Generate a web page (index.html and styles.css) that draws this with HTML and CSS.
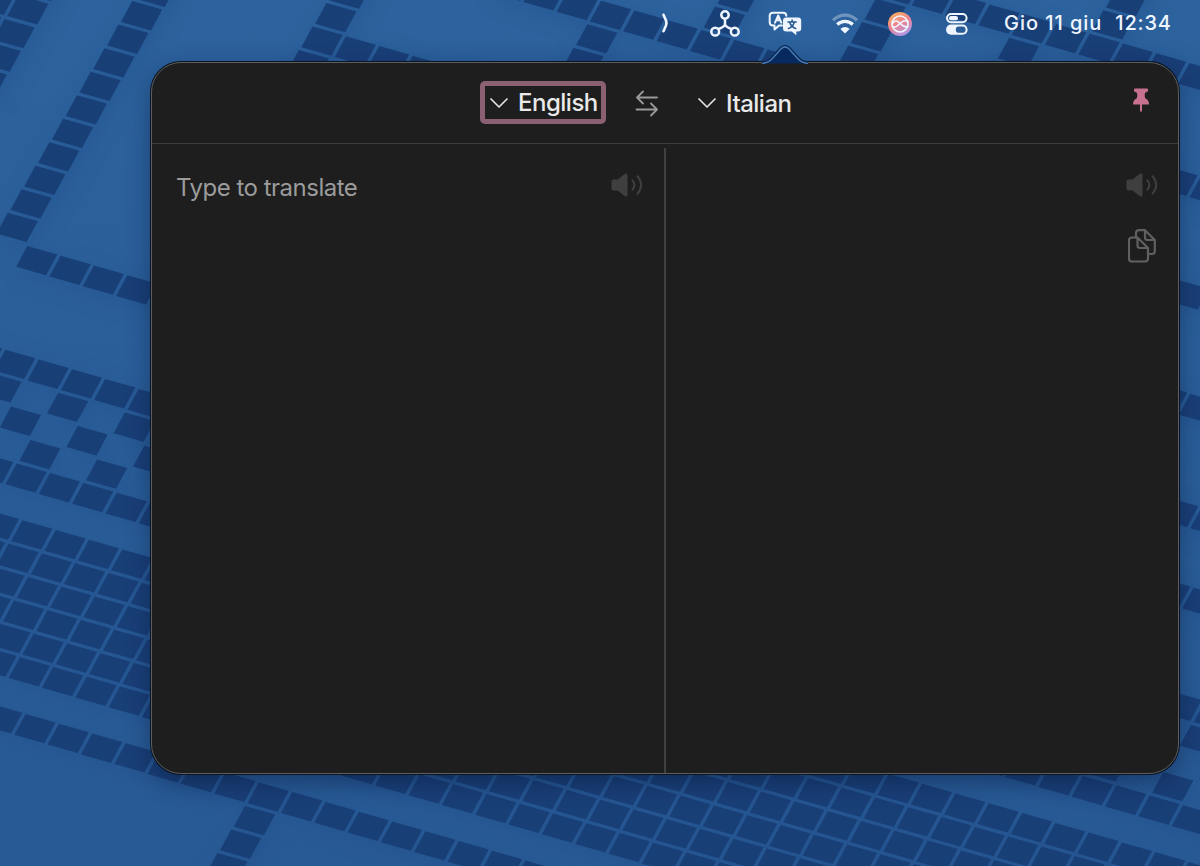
FILE: index.html
```html
<!DOCTYPE html>
<html lang="it">
<head>
    <meta charset="UTF-8">
    <meta name="viewport" content="width=device-width, initial-scale=1.0">
    <title>Translate</title>
    <link rel="stylesheet" href="styles.css">
</head>
<body>
    <svg class="wallpaper" viewBox="0 0 1200 866">
        <path id="tiles" class="tiles" d=""/>
    </svg>

    <div class="menubar">
        <svg class="chevron" width="10" height="22" viewBox="0 0 10 22"><path d="M3.5 2.8L6 8.5Q7 11 6 13.5L3.5 19.2"/></svg>
        <svg class="nodes" width="30" height="28" viewBox="0 0 30 28">
            <circle cx="15" cy="5" r="3.7"/><circle cx="5.2" cy="21.7" r="3.9"/><circle cx="24.8" cy="21.7" r="3.9"/>
            <path d="M15 9V14.5M8.3 19Q13.5 17.5 15 14.5Q16.5 17.5 21.7 19"/>
        </svg>
        <svg class="bubbles" width="34" height="26" viewBox="0 0 34 26">
            <path class="line" d="M14 14.5H11L6.5 18.5V14.5H5Q1.7 14.5 1.7 11.3V4.8Q1.7 1.7 5 1.7H15Q18.3 1.7 18.3 4.8"/>
            <path class="line thin" d="M7 11.6L10.2 4.5L13.3 11.6M8.2 9.2H12.2"/>
            <path class="solid" d="M18.2 6.5H30Q33.2 6.5 33.2 9.7V17.2Q33.2 20.4 30 20.4H28.3V24.2L23.8 20.4H18.2Q15 20.4 15 17.2V9.7Q15 6.5 18.2 6.5Z"/>
            <path class="ink" d="M20 11H28.2M24.1 9V11M26.3 11.2Q25 15.8 20.3 17.6M22 12.3Q24 16.3 27.8 17.6"/>
        </svg>
        <svg class="wifi" width="28" height="22" viewBox="0 0 28 22">
            <path class="faint" d="M2 7.3Q7.2 2.2 14 2.2T26 7.3"/>
            <path d="M6.2 11.5Q9.5 8.3 14 8.3T21.8 11.5"/>
            <path class="solid" d="M14 20.5L9.4 16Q11.4 14 14 14T18.6 16Z"/>
        </svg>
        <svg class="orb" width="24" height="24" viewBox="0 0 24 24">
            <defs>
                <linearGradient id="orb" x1="0.2" y1="0" x2="0.7" y2="1">
                    <stop offset="0" stop-color="#f7b45c"/><stop offset=".5" stop-color="#ef8190"/><stop offset="1" stop-color="#a79af0"/>
                </linearGradient>
            </defs>
            <circle class="disc" cx="12" cy="12" r="12"/>
            <circle cx="12" cy="12" r="8"/>
            <path d="M4 12Q7.5 6.5 12 11.2T20 14.5M4.5 15Q8 15.8 12 11.5T20 9.5"/>
        </svg>
        <svg class="control" width="22" height="22" viewBox="0 0 22 22">
            <rect class="line" x="1" y="1" width="19.6" height="8.2" rx="4.1"/>
            <rect class="solid" x="3" y="3" width="9" height="4.3" rx="2.1"/>
            <rect class="solid" x="0" y="11.6" width="21.6" height="10.2" rx="5.1"/>
            <rect class="hole" x="9.8" y="13.6" width="9.8" height="6.2" rx="3.1"/>
        </svg>
        <span class="date">Gio 11 giu</span>
        <span class="time">12:34</span>
    </div>

    <div class="popover">
        <svg class="arrow" width="46" height="20" viewBox="0 0 46 20">
            <path class="edge" d="M0 18.5C5 18 7 16 9 14L18 4Q23 -1 28 4L37 14C39 16 41 18 46 18.5"/>
            <path class="fill" d="M0 19.5C6 19 8 17 10 15L19 5Q23 1 27 5L36 15C38 17 40 19 46 19.5"/>
        </svg>
        <div class="header">
            <button class="lang selected">
                <svg width="18" height="12" viewBox="0 0 18 12"><path d="M1 2L9 10L17 2"/></svg>
                <span>English</span>
            </button>
            <svg class="swap" width="24" height="28" viewBox="0 0 24 28">
                <path d="M22 8.5H2M8 2.5L2 8.5L8 14.5M1.5 20.5H22M16 14.5L22 20.5L16 26.5"/>
            </svg>
            <button class="lang">
                <svg width="18" height="12" viewBox="0 0 18 12"><path d="M1 2L9 10L17 2"/></svg>
                <span>Italian</span>
            </button>
            <svg class="pin" width="18" height="25" viewBox="0 0 18 25">
                <path d="M3 .5H15Q16 .5 16 1.5V2.7Q16 3.5 15 3.8Q12.5 4.5 12.7 6.5L13 10Q17 12 17 16Q17 16.6 16.2 16.6H10V22.5L9 24.5L8 22.5V16.6H1.8Q1 16.6 1 16Q1 12 5 10L5.3 6.5Q5.5 4.5 3 3.8Q2 3.5 2 2.7V1.5Q2 .5 3 .5Z"/>
            </svg>
        </div>
        <div class="panes">
            <div class="pane source">
                <div class="placeholder">Type to translate</div>
                <svg class="speaker" width="32" height="24" viewBox="0 0 32 24">
                    <path class="solid" d="M2.5 6.5H6.5L14 .8Q16.5 -.5 16.5 2V22Q16.5 24.5 14 23.2L6.5 17.5H2.5Q.5 17.5 .5 15.5V8.5Q.5 6.5 2.5 6.5Z"/>
                    <path d="M21.5 7.3Q25.3 12 21.5 16.7M26.5 3.2Q33.8 12 26.5 20.8"/>
                </svg>
            </div>
            <div class="pane result">
                <svg class="speaker" width="32" height="24" viewBox="0 0 32 24">
                    <path class="solid" d="M2.5 6.5H6.5L14 .8Q16.5 -.5 16.5 2V22Q16.5 24.5 14 23.2L6.5 17.5H2.5Q.5 17.5 .5 15.5V8.5Q.5 6.5 2.5 6.5Z"/>
                    <path d="M21.5 7.3Q25.3 12 21.5 16.7M26.5 3.2Q33.8 12 26.5 20.8"/>
                </svg>
                <svg class="copy" width="28" height="34" viewBox="0 0 28 34">
                    <path d="M4 8.5H9.5L20 19V29.5Q20 32.5 17 32.5H4Q1 32.5 1 29.5V11.5Q1 8.5 4 8.5ZM9.5 8.5V16.5Q9.5 19 12 19H20"/>
                    <path d="M8 8.5V4Q8 1.2 11 1.2H17L26.8 11V22Q26.8 25 24 25H20.5M17 1.2V8.5Q17 11 19.5 11H26.8"/>
                </svg>
            </div>
        </div>
    </div>

    <script>
        // tile grid: [first row, last row, first column, last column]
        const areas = [
            [-12, -1, -1, -1], [-12, -6, -4, -4], [-12, -8, -5, -5],
            [0, 0, 0, 45], [-14, -10, 4, 4], [-11, -11, 5, 45],
            [-15, -15, 8, 45], [-14, -12, 11, 11], [-18, -16, 14, 14],
            [-19, -16, 18, 18], [-19, -19, 19, 45], [-18, -16, 22, 22], [-23, -20, 24, 24],
            [-7, -7, 10, 45], [-3, -3, 10, 45],
            [4, 4, -2, 45], [8, 8, -2, 45], [10, 15, -2, 50],
            [17, 17, -2, 50], [18, 22, 14, 14]
        ];

        function tile(col, row) {
            const x = 27.3 + col * 33.32 - row * 13.82;
            const y = 246 + col * 9.765 + row * 23.51;
            return `M${x.toFixed(1)} ${y.toFixed(1)}l30 8.5l-11.2 20.8l-30 -8.5z`;
        }

        let d = '';
        areas.forEach(([r1, r2, c1, c2]) => {
            for (let r = r1; r <= r2; r++) {
                for (let c = c1; c <= c2; c++) d += tile(c, r);
            }
        });
        // checkered band
        for (let r = 5; r <= 7; r++) {
            for (let c = -3; c <= 45; c++) {
                if ((c + r) % 2 === 0) d += tile(c, r);
            }
        }
        document.getElementById('tiles').setAttribute('d', d);
    </script>
</body>
</html>
```
FILE: styles.css
```css
* {
    box-sizing: border-box;
}
body {
    margin: 0;
    width: 1200px;
    height: 866px;
    overflow: hidden;
    position: relative;
    background: linear-gradient(#2c629d, #285a95);
    font-family: Inter, "Liberation Sans", sans-serif;
}
svg {
    display: block;
    flex: none;
    fill: none;
    stroke-linecap: round;
    stroke-linejoin: round;
}
.wallpaper {
    position: absolute;
    top: 0;
    left: 0;
    width: 1200px;
    height: 866px;
}
.tiles {
    fill: #193f77;
    filter: drop-shadow(3px 6px 10px rgba(28, 72, 135, 0.32));
}
.menubar {
    position: relative;
    display: flex;
    align-items: center;
    height: 46px;
    padding-left: 660px;
    color: #eef5ff;
    stroke: #eef5ff;
    font-size: 20px;
    font-weight: 500;
    white-space: nowrap;
}
.menubar span {
    stroke: none;
}
.menubar .solid {
    fill: #eef5ff;
    stroke: none;
}
.chevron {
    stroke-width: 2.6;
}
.nodes {
    margin: 1px 0 0 40px;
    stroke-width: 2.5;
}
.bubbles {
    margin: 1px 0 0 28px;
    stroke-width: 2;
}
.bubbles .ink {
    stroke: #24558e;
    stroke-width: 1.5;
}
.wifi {
    margin: 2px 0 0 29px;
    stroke-width: 3.2;
    stroke-linecap: butt;
}
.wifi .faint {
    opacity: 0.35;
}
.orb {
    margin: 2px 0 0 29px;
    stroke-width: 1.6;
}
.orb .disc {
    fill: url(#orb);
    stroke: none;
}
.control {
    margin: 1px 0 0 34px;
    stroke-width: 2;
}
.control .hole {
    fill: #2a5c98;
    stroke: none;
}
.date {
    margin-left: 36px;
    letter-spacing: 0.95px;
}
.time {
    margin-left: 13px;
    letter-spacing: 0.8px;
}
.popover {
    position: absolute;
    left: 151px;
    top: 62px;
    width: 1028px;
    height: 712px;
    display: flex;
    flex-direction: column;
    background: #1e1e1e;
    border: 1px solid #5c5e5f;
    border-radius: 30px;
    box-shadow: 0 0 0 1px #0b1420, 0 8px 24px rgba(0, 15, 45, 0.4);
}
.arrow {
    position: absolute;
    left: 610px;
    top: -19px;
}
.arrow .edge {
    stroke: #0d2c58;
    stroke-width: 1.5;
}
.arrow .fill {
    fill: #062a5d;
    stroke: #4d7db8;
    stroke-width: 1.2;
}
.header {
    display: flex;
    align-items: center;
    height: 81px;
    padding: 0 28px 0 328px;
    border-bottom: 1px solid #3d3d3d;
}
.lang {
    display: flex;
    align-items: center;
    gap: 10px;
    height: 43px;
    padding: 0 5px;
    border: 5px solid transparent;
    border-radius: 5px;
    background: none;
    color: #e9e9e9;
    font: 500 24px/32px Inter, "Liberation Sans", sans-serif;
    letter-spacing: -0.5px;
}
.lang span {
    padding-top: 1px;
}
.lang svg {
    stroke: #e2e2e2;
    stroke-width: 1.7;
}
.lang.selected {
    width: 126px;
    margin-top: -1px;
    border-color: #8b6073;
}
.swap {
    margin: 0 29px;
    stroke: #9a9a9a;
    stroke-width: 1.8;
}
.pin {
    margin: -5px 0 0 auto;
    fill: #c8708f;
}
.panes {
    display: flex;
    flex: 1;
}
.pane {
    display: flex;
}
.source {
    flex: none;
    justify-content: space-between;
    width: 514px;
    margin-top: 4px;
    padding: 25px 21px 0 24px;
    border-right: 2px solid #404040;
}
.placeholder {
    color: #9b9b9b;
    font-size: 24px;
    line-height: 30px;
    letter-spacing: -0.5px;
}
.result {
    flex: 1;
    flex-direction: column;
    align-items: flex-end;
    gap: 32px;
    padding: 29px 20px 0 0;
}
.speaker {
    stroke: #3f3f3f;
    stroke-width: 2;
}
.speaker .solid {
    fill: #3f3f3f;
    stroke: none;
}
.copy {
    margin-right: 2px;
    stroke: #606060;
    stroke-width: 2.2;
}
```
